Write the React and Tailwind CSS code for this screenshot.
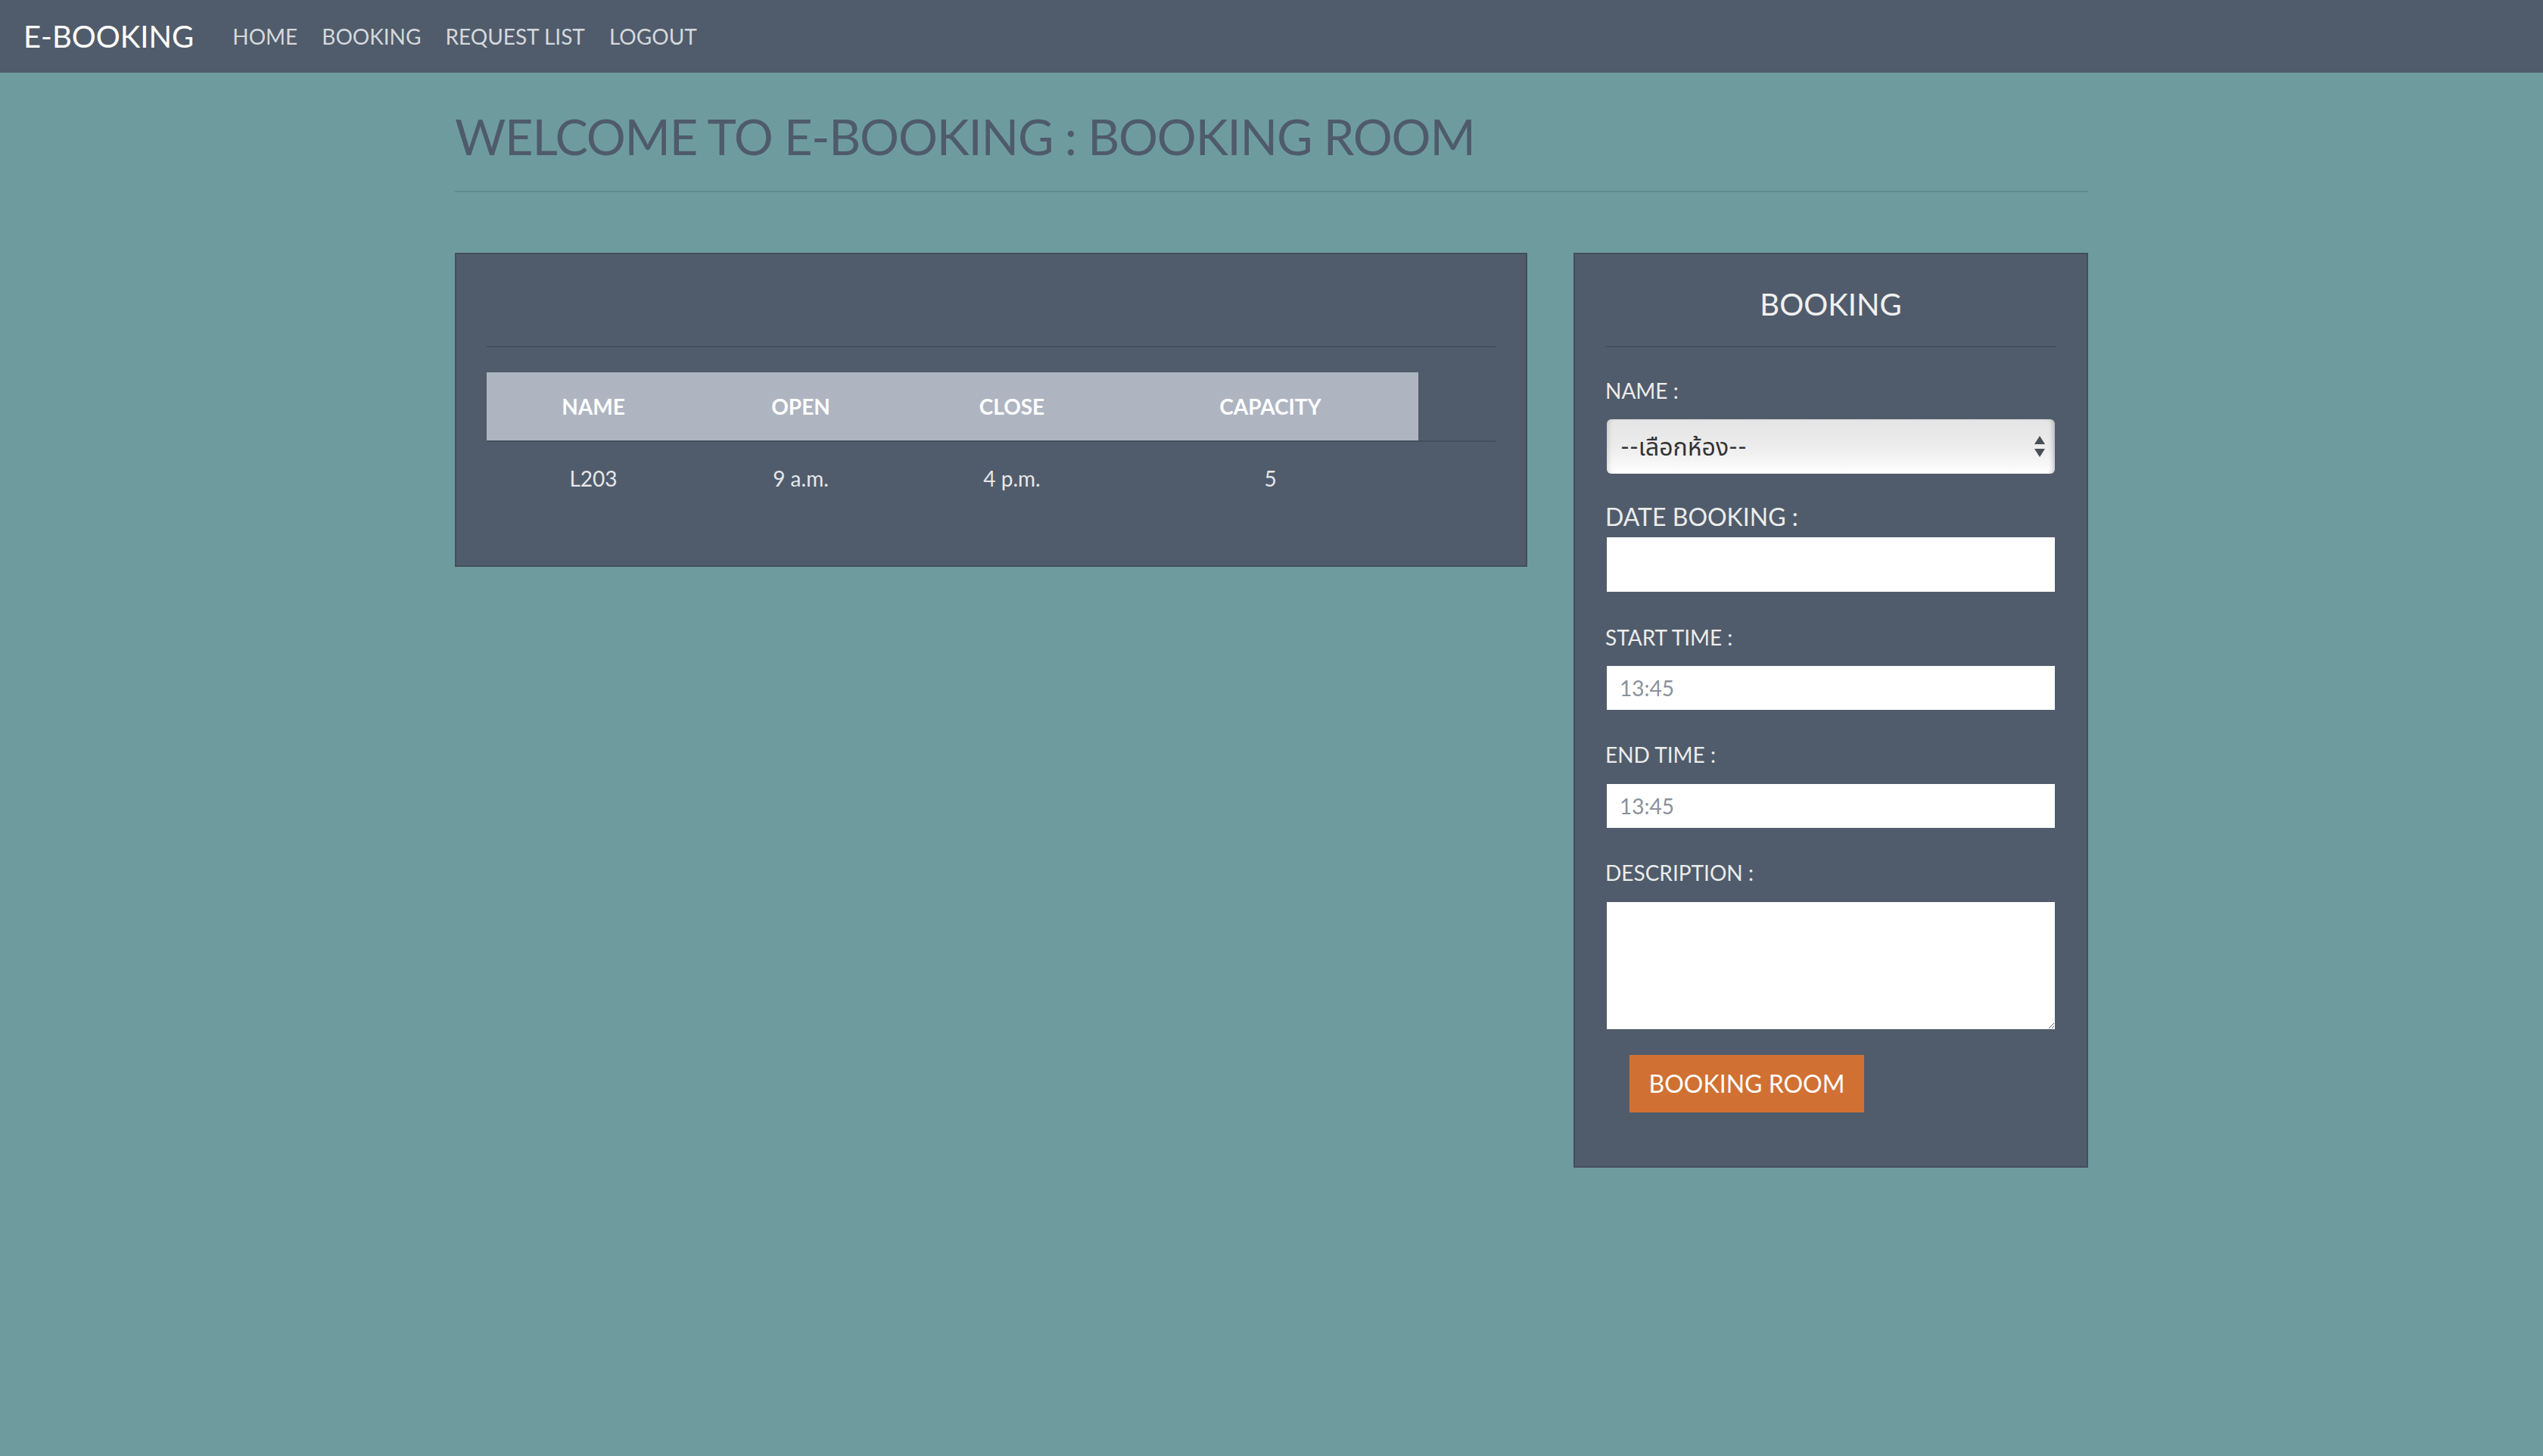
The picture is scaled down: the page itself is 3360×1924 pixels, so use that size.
import React from "react";

function Label({ children, size }) {
  return (
    <div className={`text-[#ececec] ${size} leading-none whitespace-nowrap`}>{children}</div>
  );
}

export default function App() {
  return (
    <div className="min-h-[1924px] w-full bg-[#6e9c9e] font-['Lato','Noto_Sans',sans-serif]">
      {/* Navbar */}
      <nav className="h-[96px] bg-[#505c6b] flex items-center pl-[31px]">
        <div className="text-white text-[40px] leading-none">E-BOOKING</div>
        <ul className="flex items-center gap-[32px] ml-[51px] text-[28px] leading-none text-[#d5d8dd]">
          <li>HOME</li>
          <li>BOOKING</li>
          <li>REQUEST LIST</li>
          <li>LOGOUT</li>
        </ul>
      </nav>

      <div className="w-[2158px] mx-auto">
        <h1 className="mt-[52px] text-[65px] tracking-[-1.2px] leading-none text-[#4f5b6a] whitespace-nowrap">
          WELCOME TO E-BOOKING : BOOKING ROOM
        </h1>
        <div className="mt-[39px] h-[2px] bg-[#5f8b8e]" />

        <div className="mt-[80px] flex items-start gap-[61px]">
          {/* Left panel */}
          <div className="w-[1419px] bg-[#505c6b] border-2 border-[#444e5b] px-[40px] pb-[67px]">
            <div className="h-[121px]" />
            <div className="h-[2px] bg-[#46505d]" />
            <div className="mt-[33px] border-b-2 border-[#46505d]">
              <div className="flex h-[90px] w-[1231px] bg-[#aeb5c1] items-center text-white font-bold text-[28px] leading-none">
                <div className="w-[282px] text-center">NAME</div>
                <div className="w-[266px] text-center">OPEN</div>
                <div className="w-[292px] text-center">CLOSE</div>
                <div className="w-[391px] text-center">CAPACITY</div>
              </div>
            </div>
            <div className="flex h-[96px] w-[1231px] items-center text-[#e6e7ea] text-[28px] leading-none">
              <div className="w-[282px] text-center">L203</div>
              <div className="w-[266px] text-center">9 a.m.</div>
              <div className="w-[292px] text-center">4 p.m.</div>
              <div className="w-[391px] text-center">5</div>
            </div>
          </div>

          {/* Right panel */}
          <div className="w-[680px] bg-[#505c6b] border-2 border-[#444e5b] px-[40px] pt-[46px] pb-[71px]">
            <h3 className="text-[40px] leading-none text-center text-[#f0f0f0]">BOOKING</h3>
            <div className="mt-[35px] h-[2px] bg-[#46505d]" />

            <div className="mt-[43px]">
              <Label size="text-[28px]">NAME :</Label>
            </div>
            <div className="relative mt-[24px] mx-[2px] h-[72px] rounded-[6px] bg-gradient-to-b from-[#e5e5e5] via-[#ececec] to-white shadow-[inset_-6px_0_6px_-4px_rgba(0,0,0,0.25),inset_6px_0_6px_-4px_rgba(0,0,0,0.15)] flex items-center pl-[18px]">
              <span className="text-[32px] leading-none text-[#333] font-['Lato','Noto_Sans_Thai','Loma','Garuda','Tlwg_Typo',sans-serif]">
                --เลือกห้อง--
              </span>
              <svg className="absolute right-[13px] top-[22px]" width="14" height="29" viewBox="0 0 14 29">
                <polygon points="7,0 14,11 0,11" fill="#4a4f57" />
                <polygon points="0,17 14,17 7,28" fill="#4a4f57" />
              </svg>
            </div>

            <div className="mt-[41px]">
              <Label size="text-[32px]">DATE BOOKING :</Label>
            </div>
            <div className="mt-[11px] mx-[2px] h-[72px] bg-white" />

            <div className="mt-[46px]">
              <Label size="text-[28px]">START TIME :</Label>
            </div>
            <input
              readOnly
              value="13:45"
              className="block mt-[24px] mx-[2px] w-[592px] h-[58px] bg-white pl-[17px] text-[28px] text-[#8a919b] outline-none"
            />

            <div className="mt-[45px]">
              <Label size="text-[28px]">END TIME :</Label>
            </div>
            <input
              readOnly
              value="13:45"
              className="block mt-[25px] mx-[2px] w-[592px] h-[58px] bg-white pl-[17px] text-[28px] text-[#8a919b] outline-none"
            />

            <div className="mt-[45px]">
              <Label size="text-[28px]">DESCRIPTION :</Label>
            </div>
            <textarea className="block mt-[25px] mx-[2px] w-[592px] h-[168px] bg-white outline-none" />

            <button className="block mt-[34px] ml-[32px] w-[310px] h-[76px] bg-[#d07133] text-white text-[32px] leading-none">
              BOOKING ROOM
            </button>
          </div>
        </div>
      </div>
    </div>
  );
}
